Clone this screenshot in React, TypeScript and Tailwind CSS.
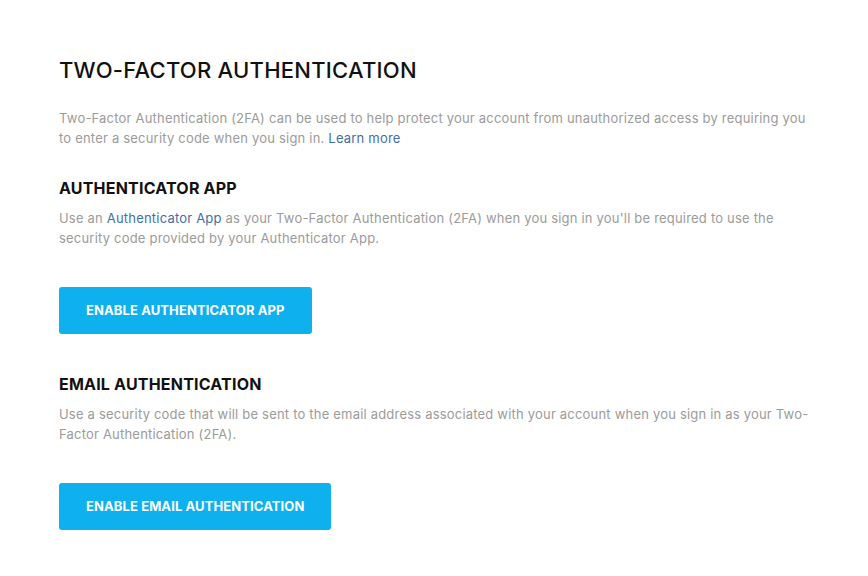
import React from 'react';

type Section = {
    title: string;
    body: React.ReactNode;
    action: string;
};

const sections: Section[] = [
    {
        title: 'AUTHENTICATOR APP',
        body: (
            <>
                Use an <a className="text-[#3f6fa3]">Authenticator App</a> as your Two-Factor Authentication (2FA) when you sign in you'll be required to use the security code provided by your Authenticator App.
            </>
        ),
        action: 'ENABLE AUTHENTICATOR APP'
    },
    {
        title: 'EMAIL AUTHENTICATION',
        body: 'Use a security code that will be sent to the email address associated with your account when you sign in as your Two-Factor Authentication (2FA).',
        action: 'ENABLE EMAIL AUTHENTICATION'
    }
];

export default function App() {
    return (
        <div className="min-h-[576px] w-full bg-white font-['Inter',sans-serif]">
            <div className="pl-[59px] pt-[56px] w-[811px]">
                <h1 className="text-[22px] leading-[28px] font-medium tracking-[0.25px] text-[#111111]">
                    TWO-FACTOR AUTHENTICATION
                </h1>
                <p className="mt-[24px] text-[13px] leading-[20px] tracking-[0.2px] text-[#9b9b9b]">
                    Two-Factor Authentication (2FA) can be used to help protect your account from unauthorized access by requiring you to enter a security code when you sign in. <a className="text-[#3f6fa3]">Learn more</a>
                </p>

                {sections.map((section, i) => (
                    <div key={section.title} className={i === 0 ? 'mt-[29px]' : 'mt-[39px]'}>
                        <h2 className="text-[16px] leading-[22px] font-bold tracking-[0.2px] text-[#111111]">
                            {section.title}
                        </h2>
                        <p className="mt-[9px] text-[13px] leading-[20px] tracking-[0.2px] text-[#9b9b9b]">
                            {section.body}
                        </p>
                        <button
                            type="button"
                            className="mt-[39px] h-[47px] px-[27px] rounded-[3px] bg-[#0fb0ee] text-white text-[13px] font-bold tracking-[0.1px]"
                        >
                            {section.action}
                        </button>
                    </div>
                ))}
            </div>
        </div>
    );
}
